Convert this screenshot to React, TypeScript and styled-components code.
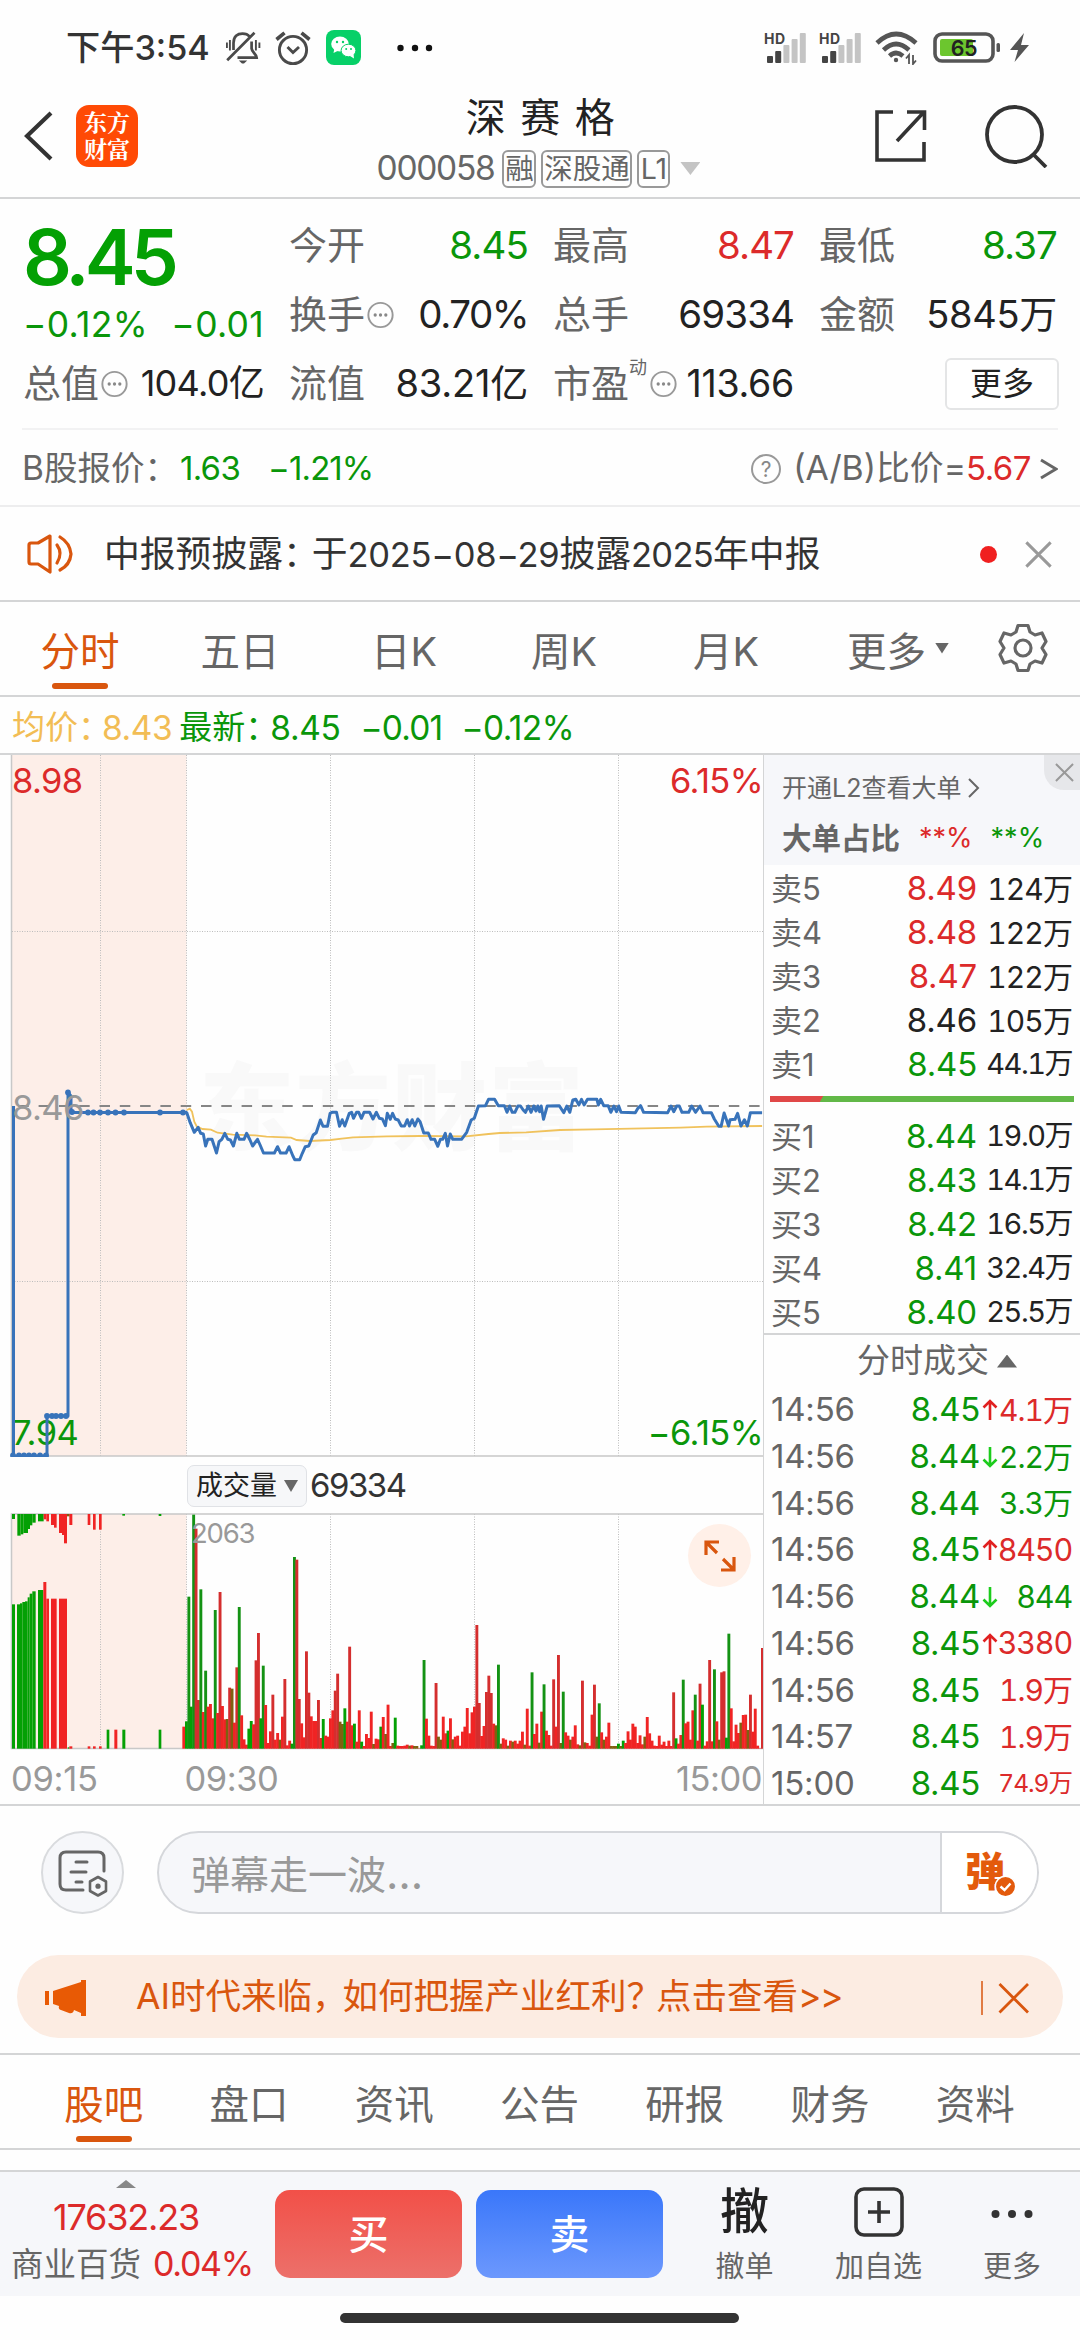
import React from "react";
import styled, { createGlobalStyle } from "styled-components";

const RED = "#dc2a2a";
const GREEN = "#0a960a";
const INK = "#222";
const GRAY = "#666";
const ORANGE = "#d9560e";
const LINE = "#d4d5d6";

const GlobalStyle = createGlobalStyle`
  * { box-sizing: border-box; }
  body {
    margin: 0;
    background: #fefefe;
    font-family: Inter, "Noto Sans CJK SC", sans-serif;
    color: ${INK};
  }
  svg { display: block; flex: none; }
`;

const Page = styled.div`
  width: 1080px;
  height: 2340px;
  overflow: hidden;
  display: flex;
  flex-direction: column;
  background: #fefefe;
`;

const T = styled.span<{ $c?: string; $s?: number; $w?: number; $ls?: number; $tab?: boolean }>`
  color: ${(p) => p.$c ?? INK};
  font-size: ${(p) => p.$s ?? 36}px;
  font-weight: ${(p) => p.$w ?? 400};
  letter-spacing: ${(p) => p.$ls ?? 0}px;
  font-variant-numeric: ${(p) => (p.$tab ? "tabular-nums" : "normal")};
  line-height: 1.2;
  white-space: pre;
`;
/* full-width punctuation and digits set closer than the surrounding characters */
const Tight = styled.span<{ $ls: number; $s?: number }>`
  letter-spacing: ${(p) => p.$ls}px;
  font-size: ${(p) => (p.$s ? `${p.$s}px` : "inherit")};
`;

/* ---------- status bar ---------- */
const StatusBar = styled.div`
  height: 96px;
  flex: none;
  display: flex;
  align-items: center;
  padding: 0 50px 1px 66px;
`;
const StatusLeft = styled.div`
  display: flex;
  align-items: center;
  flex: 1;
`;
const StatusRight = styled.div`
  display: flex;
  align-items: center;
`;
const Gap = styled.div<{ $w: number }>`
  width: ${(p) => p.$w}px;
  flex: none;
`;

const Signal = ({ strong }: { strong: number }) => (
  <svg width="44" height="34" viewBox="0 0 44 34">
    <text x="0" y="12.5" fontSize="14" fontWeight="700" fill="#444" letterSpacing="0.6">HD</text>
    {[0, 1, 2, 3, 4].map((i) => {
      const h = [7, 12, 18, 24, 30][i];
      return <rect key={i} x={3 + i * 8.2} y={32 - h} width="6" height={h} rx="1" fill={i < strong ? "#444" : "#c4c4c4"} />;
    })}
  </svg>
);

/* ---------- header ---------- */
const Header = styled.div`
  height: 103px;
  flex: none;
  display: flex;
  align-items: center;
  padding: 0 31px 0 24px;
  border-bottom: 2px solid ${LINE};
`;
const HeaderSide = styled.div<{ $end?: boolean }>`
  width: 320px;
  display: flex;
  align-items: center;
  padding-bottom: 21px;
  justify-content: ${(p) => (p.$end ? "flex-end" : "flex-start")};
`;
const Logo = styled.div`
  width: 62px;
  height: 62px;
  border-radius: 13px;
  background: #ff4a05;
  color: #fff;
  font: 700 23px/27px "Noto Serif CJK SC", "Noto Sans CJK SC", sans-serif;
  padding: 3px 8px 0;
  word-break: break-all;
`;
const TitleBlock = styled.div`
  flex: 1;
  display: flex;
  flex-direction: column;
  align-items: center;
  padding: 0 0 11px 4px;
`;
const Title = styled.h1`
  margin: 0;
  padding-left: 18px;
  font-size: 40px;
  font-weight: 400;
  letter-spacing: 14.5px;
  line-height: 1.2;
`;
const CodeLine = styled.div`
  display: flex;
  align-items: center;
  height: 40px;
  margin-top: 7px;
`;
const Tag = styled.span<{ $w: number }>`
  width: ${(p) => p.$w}px;
  height: 38px;
  border: 2px solid #999;
  border-radius: 6px;
  color: ${GRAY};
  font-size: 28.5px;
  line-height: 33px;
  display: flex;
  justify-content: center;
  white-space: nowrap;
  margin-right: 5px;
`;
const Tri = styled.i<{ $w: number; $h: number; $c: string; $up?: boolean }>`
  width: ${(p) => p.$w}px;
  height: ${(p) => p.$h}px;
  background: ${(p) => p.$c};
  clip-path: ${(p) => (p.$up ? "polygon(50% 0, 100% 100%, 0 100%)" : "polygon(0 0, 100% 0, 50% 100%)")};
  flex: none;
`;

/* ---------- quote ---------- */
const Quote = styled.div`
  height: 229px;
  flex: none;
  padding: 12px 23px 0 23px;
  display: grid;
  grid-template-columns: 241px 239px 241px 238px;
  column-gap: 25px;
  grid-template-rows: 69px 69px 69px;
  justify-content: space-between;
`;
const LastPrice = styled.div`
  grid-row: 1 / span 2;
  display: flex;
  flex-direction: column;
  padding-top: 2px;
`;
const BigNumber = styled.div`
  font-size: 76.5px;
  font-weight: 600;
  line-height: 88px;
  letter-spacing: -5px;
  color: #04a004;
`;
const Spread = styled.div<{ $h?: number }>`
  display: flex;
  justify-content: space-between;
  align-items: center;
  height: ${(p) => (p.$h ? `${p.$h}px` : "auto")};
`;
const LabelWrap = styled.span`
  display: flex;
  align-items: center;
`;
const Sup = styled.span`
  font-size: 18px;
  line-height: 20px;
  color: ${GRAY};
  align-self: flex-start;
  margin: -3px 1px 0 0;
`;
const MoreButton = styled.button`
  justify-self: end;
  align-self: center;
  width: 114px;
  height: 52px;
  margin-right: -2px;
  border: 2px solid #e4e5e6;
  border-radius: 6px;
  background: #fff;
  color: ${INK};
  font: 400 32px/1 Inter, "Noto Sans CJK SC", sans-serif;
  padding: 0;
`;
const HintIcon = styled.svg`
  margin-left: 2px;
`;
const Hint = () => (
  <HintIcon width="27" height="28" viewBox="0 0 28 28">
    <circle cx="14" cy="14" r="12.6" fill="none" stroke="#999" strokeWidth="2" />
    {[8.5, 14, 19.5].map((x) => <circle key={x} cx={x} cy="14" r="1.7" fill="#888" />)}
  </HintIcon>
);
const CompareRow = styled.div`
  height: 77px;
  flex: none;
  margin: 0 22px;
  padding-top: 2px;
  border-top: 2px solid #f2f2f3;
  display: flex;
  align-items: center;
`;

/* ---------- notice ---------- */
const Notice = styled.div`
  height: 97px;
  flex: none;
  border-top: 2px solid #ededee;
  border-bottom: 2px solid ${LINE};
  display: flex;
  align-items: center;
  padding: 1px 28px 0 26px;
`;
const Dot = styled.i`
  width: 17px;
  height: 17px;
  border-radius: 50%;
  background: #f02020;
`;
const Fill = styled.div`
  flex: 1;
`;

/* ---------- tabs ---------- */
const Tabs = styled.div<{ $h: number }>`
  height: ${(p) => p.$h}px;
  flex: none;
  border-bottom: 2px solid ${LINE};
  display: flex;
  align-items: stretch;
`;
const Tab = styled.div<{ $w: number; $on?: boolean }>`
  width: ${(p) => p.$w}px;
  display: flex;
  align-items: center;
  justify-content: center;
  gap: 9px;
  font-size: 39.5px;
  padding-bottom: 1px;
  color: ${(p) => (p.$on ? ORANGE : GRAY)};
  position: relative;
  &::after {
    content: "";
    display: ${(p) => (p.$on ? "block" : "none")};
    position: absolute;
    left: calc(50% - 28px);
    bottom: 6px;
    width: 56px;
    height: 6px;
    border-radius: 3px;
    background: ${ORANGE};
  }
`;
const AvgLine = styled.div`
  height: 58px;
  flex: none;
  border-bottom: 2px solid ${LINE};
  display: flex;
  align-items: center;
  padding: 6px 0 0 12px;
`;

/* ---------- market area ---------- */
const Market = styled.div`
  height: 1051px;
  flex: none;
  display: flex;
  overflow: hidden;
  border-bottom: 2px solid ${LINE};
`;
const Charts = styled.div`
  width: 763px;
  display: flex;
  flex-direction: column;
`;
const VolumeHead = styled.div`
  height: 56px;
  display: flex;
  align-items: center;
  padding: 2px 0 0 187px;
`;
const VolumePicker = styled.div`
  width: 120px;
  height: 42px;
  border: 1.5px solid #e0e2e6;
  border-radius: 7px;
  background: #f6f7f9;
  display: flex;
  align-items: center;
  justify-content: space-between;
  padding: 0 8px;
  margin-right: 3px;
`;
const VolumeBox = styled.div`
  height: 237px;
  position: relative;
`;
const Expand = styled.div`
  position: absolute;
  left: 688px;
  top: 11px;
  width: 63px;
  height: 63px;
  border-radius: 50%;
  background: #fff0e8;
  display: flex;
  align-items: center;
  justify-content: center;
`;
const TimeAxis = styled.div`
  flex: 1;
  display: flex;
  align-items: center;
  padding: 4px 1px 0 11px;
`;
const Panel = styled.div`
  flex: 1;
  border-left: 1.5px solid ${LINE};
  display: flex;
  flex-direction: column;
`;
const PanelHead = styled.div`
  height: 110px;
  flex: none;
  background: #f6f7fa;
  padding: 8px 0 0 18px;
  position: relative;
`;
const PanelLine = styled.div<{ $h: number }>`
  height: ${(p) => p.$h}px;
  display: flex;
  align-items: center;
`;
const CloseCorner = styled.div`
  position: absolute;
  right: 0;
  top: 0;
  width: 36px;
  height: 35px;
  background: #e6e7ea;
  border-bottom-left-radius: 20px;
  display: flex;
  align-items: center;
  justify-content: center;
  padding-left: 4px;
`;
const BookRow = styled.div`
  height: 44px;
  flex: none;
  display: grid;
  grid-template-columns: 80px 126px 95px;
  padding: 3px 0 0 7px;
  align-items: center;
`;
const Right = styled.div`
  display: flex;
  justify-content: flex-end;
  white-space: nowrap;
`;
const RatioBar = styled.div`
  height: 6px;
  margin: 11px 6px 11px 6px;
  background: linear-gradient(120deg, #e04848 0 17.2%, #62b848 17.4%);
  flex: none;
`;
const TradeHead = styled.div`
  border-top: 2px solid ${LINE};
  height: 53px;
  display: flex;
  align-items: center;
  justify-content: center;
  gap: 8px;
  padding: 1px 0 0 30px;
  flex: none;
`;
const TradeRow = styled.div`
  height: 46.75px;
  flex: none;
  display: grid;
  grid-template-columns: 95px 114px 18px 74px;
  padding: 1px 0 0 7px;
  align-items: center;
`;

/* ---------- comments ---------- */
const CommentRow = styled.div`
  height: 149px;
  flex: none;
  display: flex;
  align-items: flex-start;
  padding: 25px 41px 0;
  gap: 33px;
`;
const RoundButton = styled.div`
  width: 83px;
  height: 83px;
  border: 2px solid #d9dbde;
  border-radius: 50%;
  background: #f6f7fa;
  display: flex;
  align-items: center;
  justify-content: center;
`;
const CommentField = styled.div`
  flex: none;
  width: 882px;
  height: 83px;
  border: 2px solid #d5d7db;
  border-radius: 42px;
  background: #f6f7fa;
  overflow: hidden;
  display: flex;
  align-items: stretch;
`;
const Placeholder = styled.div`
  width: 783px;
  border-right: 2px solid #d5d7db;
  padding-left: 32px;
  font-size: 39px;
  line-height: 80px;
  color: #999;
`;
const DanToggle = styled.div`
  flex: 1;
  background: #fff;
  display: flex;
  align-items: center;
  padding: 0 0 7px 23px;
  font-size: 40px;
  font-weight: 800;
  color: #e35a0c;
  position: relative;
`;
const Badge = styled.div`
  position: absolute;
  left: 52px;
  top: 42px;
`;
const Banner = styled.div`
  height: 83px;
  flex: none;
  margin: 0 17px 15px;
  border-radius: 42px;
  background: #fcece2;
  display: flex;
  align-items: center;
  padding: 2px 34px 0 27px;
`;
const BottomTabs = styled(Tabs)`
  border-top: 2px solid ${LINE};
  padding: 0 32px 0 31px;
`;

/* ---------- footer ---------- */
const Footer = styled.div`
  height: 126px;
  flex: none;
  margin-top: 20px;
  border-top: 2px solid ${LINE};
  background: #f6f7fa;
  display: flex;
`;
const IndexCell = styled.div`
  width: 275px;
  display: flex;
  flex-direction: column;
  padding: 8px 0 0 11px;
`;
const IndexArrow = styled(Tri)`
  margin-left: 105px;
`;
const Trade = styled.button<{ $sell?: boolean }>`
  width: 187px;
  height: 88px;
  margin: 18px 14px 0 0;
  border: 0;
  padding: 0 0 4px;
  border-radius: 15px;
  color: #fff;
  font: 500 40px/1 "Noto Sans CJK SC", sans-serif;
  background: ${(p) => (p.$sell ? "linear-gradient(#3a77fa, #6c98fd)" : "linear-gradient(#f25048, #ec706a)")};
`;
const Action = styled.div<{ $w: number }>`
  width: ${(p) => p.$w}px;
  display: flex;
  flex-direction: column;
  align-items: center;
  padding-top: 14px;
`;
const ActionIcon = styled.div`
  height: 52px;
  display: flex;
  align-items: center;
  justify-content: center;
  font-size: 49px;
  line-height: 54px;
  font-weight: 500;
  margin-bottom: 12px;
`;
const HomeBar = styled.div`
  width: 399px;
  height: 10px;
  flex: none;
  border-radius: 5px;
  background: #333;
  margin: 17px auto 0 340px;
`;

/* ---------- data ---------- */
const price: [number, number][] = [
  [10,188],[18,188],[27,218],[38,247],[48,232],[55,250],[62,252],[68,288],[74,268],[85,268],[97,309],[104,275],[111,268],[119,250],[127,268],[134,270],[142,288],[151,250],[158,268],[170,268],[177,250],[186,270],[193,288],[206,268],[213,285],[222,309],[251,309],[259,290],[267,309],[282,309],[290,290],[300,318],[305,329],[318,329],[325,310],[333,290],[342,288],[354,255],[362,248],[373,210],[380,229],[392,229],[399,190],[404,187],[416,187],[424,229],[431,209],[438,228],[450,190],[456,187],[461,205],[469,187],[475,187],[482,205],[489,187],[504,187],[513,207],[522,187],[530,205],[538,207],[546,227],[551,190],[559,208],[565,190],[572,207],[580,210],[588,228],[597,228],[604,209],[610,228],[617,209],[624,228],[632,207],[638,215],[648,249],[660,249],[667,268],[677,268],[685,289],[692,268],[698,268],[705,250],[711,288],[718,252],[725,268],[748,268],[762,247],[774,210],[782,205],[793,168],[812,167],[820,148],[836,148],[846,167],[862,167],[869,187],[876,168],[883,187],[890,187],[898,168],[905,168],[912,180],[918,187],[926,168],[933,187],[940,168],[946,183],[951,168],[956,185],[960,168],[966,208],[976,168],[1008,167],[1020,188],[1028,168],[1036,187],[1044,150],[1052,148],[1060,165],[1067,148],[1074,165],[1083,148],[1108,148],[1112,165],[1118,148],[1126,167],[1138,167],[1145,187],[1153,168],[1160,185],[1166,168],[1172,187],[1210,188],[1217,175],[1224,167],[1232,187],[1296,188],[1305,168],[1312,185],[1320,168],[1327,168],[1334,187],[1352,187],[1360,168],[1370,187],[1382,168],[1390,188],[1412,188],[1420,207],[1432,229],[1438,229],[1446,189],[1458,228],[1462,209],[1475,208],[1482,190],[1491,228],[1500,209],[1508,228],[1516,188],[1547,188],
];
const average: [number, number][] = [
  [18,180],[26,176],[32,185],[38,215],[45,230],[60,237],[82,239],[100,248],[140,254],[200,256],[230,260],[295,263],[310,270],[345,273],[400,270],[430,266],[460,262],[550,259],[640,258],[760,259],[820,252],[850,249],[920,247],[1010,240],[1100,238],[1200,236],[1330,233],[1400,230],[1547,228],
];
const toPoints = (list: [number, number][]) =>
  list.map(([x, y]) => `${(180 + x / 2.6576).toFixed(1)},${(295 + y / 3).toFixed(1)}`).join(" ");

/* one entry per minute: bar top (thirds of a pixel), g = falling, b = mixed, otherwise rising */
const volume =
  "812g 438g 768g 192g 234 748 416g 784 660g 768 760 803 478g 787 424 766 806 805b 711 714b 816 650 469g 794 866 882 834g 811g 821 629 547 803g 645g 763 877 842 732 867 847 867b 798 685 884 870 879g 319g 327 745 818 860 602 726 797 811 811 748 862 805g 855 858 803 779 720 669 813b 820b 773g 813 588 824 819g 873 779 873g 886 850 862 783 880b 864 866 828g 799 850b 762 886 877b 801g 885 886 886 885 882 885b 884 886b 886b 893 884g 628g 804 855 885 886 697 858b 867b 798 848 840g 803 866b 858 855 885 843 828 772 848 785 768 523 757 856 826 724 675 727 819 824b 642g 879b 863 867 885b 870 873b 870 879 870 843 882b 774 885 665g 850 819 876b 783 701g 840 853 885 686 828 613 877b 723g 845 855 867b 858 824 881 884b 690 875b 877 885 792 702 858b 758g 845 867b 858 816 886b 886b 886b 879g 886b 870g 877 842 867 819 828 877 854 881 858b 799 848 870 885 886 855 882 873 886 870 886 725 863g 879 853 687g 818 813 867 779 732g 870 699 762g 885 872 628 872 656g 812 867b 665 662 861g 549g 773 872 822 847 816b 793 792 838b 732 843 774 885 893 592".split(" ");

/* call-auction bars: x, width, top, bottom, colour */
const auction: [number, number, number, number, string][] = [
  [36,9,461,894,"g"],[51,9,461,894,"g"],[60,7,458,894,"g"],[67,8,454,894,"g"],[75,8,452,894,"g"],[83,6,440,894,"g"],[89,8,429,894,"g"],[97,10,422,894,"g"],
  [114,16,418,894,"g"],[130,9,394,894,"r"],[139,8,444,894,"r"],[153,17,444,894,"r"],[177,24,444,894,"r"],[203,5,890,894,"g"],[208,9,887,894,"r"],
  [263,8,887,894,"r"],[279,8,887,894,"r"],[297,8,887,894,"r"],[320,8,837,894,"g"],[343,9,837,894,"r"],[367,9,837,894,"g"],[476,8,837,894,"g"],[547,8,828,894,"r"],
  [36,9,190,205,"g"],[52,10,190,255,"g"],[62,8,190,251,"g"],[70,14,190,247,"g"],[84,6,190,235,"g"],[90,7,190,224,"g"],[97,10,190,216,"g"],[114,17,190,212,"g"],
  [131,8,190,206,"r"],[139,8,190,212,"r"],[153,9,190,223,"r"],[162,8,190,231,"r"],[177,9,190,247,"r"],[186,6,190,253,"r"],[192,9,190,278,"r"],[201,8,190,197,"b"],[208,9,190,223,"r"],
  [263,8,190,223,"r"],[279,8,190,237,"r"],[297,8,190,237,"r"],[367,8,190,195,"g"],[476,8,190,196,"g"],
];
const barColor: Record<string, string> = { g: "#04a004", r: "#f02424", b: "#806010" };
const verticals = [100.5, 186.5, 330.5, 474.5, 618.5];

const PriceChart = () => (
  <svg width="763" height="702" viewBox="0 0 763 702" fontFamily="Inter, sans-serif" fontSize="34.5" letterSpacing="-0.6">
    <rect x="12" y="0" width="174.5" height="701" fill="#fdeee8" />
    <text x="199" y="388" fontFamily="Noto Sans CJK SC" fontWeight="900" fontSize="95" letterSpacing="1.5" fill="#f9f9f9">东方财富</text>
    <g stroke="#bcbcbc" strokeWidth="1" strokeDasharray="1 1.500">
      {verticals.map((x) => <path key={x} d={`M${x} 0V701`} />)}
      <path d="M12 176.5H763M12 526.5H763" />
    </g>
    <path d="M11.5 0V701H763" fill="none" stroke="#c8c8c8" strokeWidth="1.5" />
    <path d="M12 351H763" stroke="#868686" strokeWidth="2" strokeDasharray="10.5 9.8" strokeDashoffset="14" />
    <text x="12" y="38" fill={RED}>8.98</text>
    <text x="763" y="38" fill={RED} textAnchor="end">6.15%</text>
    <text x="12" y="690" fill={GREEN}>7.94</text>
    <text x="763" y="690" fill={GREEN} textAnchor="end">−6.15%</text>
    <polyline points={toPoints(average)} fill="none" stroke="#f0c25c" strokeWidth="1.8" />
    <path d="M13.5 351V701H47V661H68V337.5L71 341V357.5H187" fill="none" stroke="#3873ba" strokeWidth="3" strokeLinejoin="round" />
    <g fill="#3873ba">
      {[88, 93.5, 100, 108, 115.5, 124, 160, 183].map((x) => <circle key={x} cx={x} cy="357.5" r="2.9" />)}
      {[13, 19, 24, 29, 34, 40, 46].map((x) => <circle key={x} cx={x} cy="700.5" r="2.9" />)}
      {[47, 52, 56, 61, 66].map((x) => <circle key={x} cx={x} cy="661" r="2.9" />)}
      <circle cx="68" cy="337.5" r="2.9" />
      <circle cx="72" cy="357" r="2.9" />
    </g>
    <polyline points={toPoints(price)} fill="none" stroke="#3873ba" strokeWidth="3" strokeLinejoin="round" />
    <text x="12" y="364.5" fill="#999">8.46</text>
  </svg>
);

const VolumeChart = () => (
  <svg width="763" height="237" viewBox="0 0 763 237">
    <rect x="12" y="1" width="174.5" height="234" fill="#fdeee8" />
    <g stroke="#bcbcbc" strokeWidth="1" strokeDasharray="1 1.500">
      {verticals.map((x) => <path key={x} d={`M${x} 1V235`} />)}
    </g>
    <path d="M763 1H11.5V235.5H763" fill="none" stroke="#c8c8c8" strokeWidth="1.5" />
    {auction.map(([x, w, a, b, c], i) => (
      <rect key={i} x={x / 3} width={w / 3} y={(a - 187) / 3} height={(b - a) / 3} fill={barColor[c]} />
    ))}
    {volume.map((v, i) => {
      const top = parseInt(v, 10);
      const kind = /[gb]$/.test(v) ? v.slice(-1) : "r";
      return <rect key={i} x={185 + i * 2.4} width="2.9" y={(top - 187) / 3} height={(894 - top) / 3} fill={kind === "r" && top < 760 ? "#d42e2e" : kind === "g" && top < 760 ? "#149214" : barColor[kind]} />;
    })}
    <text x="191" y="30" fontSize="27.5" fill="#999" letterSpacing="-1.2">2063</text>
  </svg>
);

const asks = [["卖5", "8.49", "124万", RED], ["卖4", "8.48", "122万", RED], ["卖3", "8.47", "122万", RED], ["卖2", "8.46", "105万", INK], ["卖1", "8.45", "44.1万", GREEN]];
const bids = [["买1", "8.44", "19.0万"], ["买2", "8.43", "14.1万"], ["买3", "8.42", "16.5万"], ["买4", "8.41", "32.4万"], ["买5", "8.40", "25.5万"]];
const trades: [string, string, string, string, string][] = [
  ["14:56", "8.45", "up", "4.1万", RED], ["14:56", "8.44", "down", "2.2万", GREEN], ["14:56", "8.44", "", "3.3万", GREEN],
  ["14:56", "8.45", "up", "8450", RED], ["14:56", "8.44", "down", "844", GREEN], ["14:56", "8.45", "up", "3380", RED],
  ["14:56", "8.45", "", "1.9万", RED], ["14:57", "8.45", "", "1.9万", RED], ["15:00", "8.45", "", "74.9万", RED],
];

const Book = ({ row }: { row: string[] }) => (
  <BookRow>
    <T $c={GRAY} $s={31}>{row[0]}</T>
    <Right><T $c={row[3] ?? GREEN} $s={33} $ls={-0.2}>{row[1]}</T></Right>
    <Right><T $tab $s={row[2].length > 4 ? 29 : 30} $ls={row[2].length > 4 ? -1.5 : -0.9}>{row[2]}</T></Right>
  </BookRow>
);

const Cross = ({ size, color, w = 2.5 }: { size: number; color: string; w?: number }) => (
  <svg width={size} height={size} viewBox="0 0 20 20">
    <path d="M1 1L19 19M19 1L1 19" stroke={color} strokeWidth={(w * 20) / size} fill="none" />
  </svg>
);

const Item = ({ label, value, color, hint, sup, s = 38.5, ls = -0.9 }: { label: string; value: string; color?: string; hint?: boolean; sup?: string; s?: number; ls?: number }) => (
  <Spread>
    <LabelWrap>
      <T $c={GRAY} $s={38}>{label}</T>
      {sup && <Sup>{sup}</Sup>}
      {hint && <Hint />}
    </LabelWrap>
    <T $c={color} $s={s} $ls={ls}>{value}</T>
  </Spread>
);

export default function App() {
  return (
    <>
      <GlobalStyle />
      <Page>
        <StatusBar>
          <StatusLeft>
            <T $s={34.2} $w={500} $c="#333">下午3:54</T>
            <Gap $w={16} />
            <svg width="36" height="36" viewBox="0 0 36 36" fill="none" stroke="#4a4a4a" strokeWidth="2.700">
              <path d="M7.500 20V13C7.500 6 11.500 3.600 16.500 3.600C19.500 3.600 22 4.600 23.500 6.500M25.600 11.500V18.500C26 22.500 30.500 24 30.700 27.700H11.500M28.500 2.700L1.200 30.300" />
              <path d="M12.800 30.500H21.200L18 33.500H16Z" fill="#4a4a4a" stroke="none" />
              <path d="M3.900 10V20.500M0.900 12.500V18M29.900 10V20.500M33.400 12.500V18" strokeWidth="1.900" />
            </svg>
            <Gap $w={13} />
            <svg width="36" height="36" viewBox="0 0 36 36" fill="none" stroke="#4a4a4a" strokeWidth="2.900">
              <circle cx="18" cy="20" r="13.600" />
              <path d="M1.500 9.500L9.500 2.800M34.500 9.500L26.500 2.800" strokeWidth="3.600" />
              <path d="M12.500 17L18 22.500L24 17" />
            </svg>
            <Gap $w={15} />
            <svg width="35" height="35" viewBox="0 0 35 35">
              <rect width="35" height="35" rx="8" fill="#07d068" />
              <ellipse cx="14" cy="14" rx="8.800" ry="7.400" fill="#fff" />
              <path d="M8.500 18L7.500 23L12.500 20.500Z" fill="#fff" />
              <ellipse cx="22.500" cy="20.500" rx="7.400" ry="6.300" fill="#fff" stroke="#07d068" strokeWidth="1" />
              <path d="M24 26L28 28.500L27.500 24Z" fill="#fff" />
              <circle cx="11" cy="12" r="1.200" fill="#07d068" /><circle cx="17" cy="12" r="1.200" fill="#07d068" />
              <circle cx="20.200" cy="19" r="1" fill="#07d068" /><circle cx="25" cy="19" r="1" fill="#07d068" />
            </svg>
            <Gap $w={36} />
            <svg width="36" height="8" viewBox="0 0 36 8" fill="#111"><circle cx="3.500" cy="4" r="3.200" /><circle cx="18" cy="4" r="3.200" /><circle cx="32" cy="4" r="3.200" /></svg>
          </StatusLeft>
          <StatusRight>
            <Signal strong={2} />
            <Gap $w={11} />
            <Signal strong={2} />
            <Gap $w={12} />
            <svg width="44" height="34" viewBox="0 0 44 34" fill="none" stroke="#555" strokeWidth="4.600">
              <path d="M2 12Q21 -6 41 12M8.500 19Q21 7 34 19M14.500 25Q21 19 28 25" />
              <circle cx="21" cy="29" r="2.200" fill="#555" stroke="none" />
              <path d="M34 33V24L31 27.500M38 24V33L41 29.500" strokeWidth="1.800" />
            </svg>
            <Gap $w={14} />
            <svg width="68" height="32" viewBox="0 0 68 32">
              <rect x="2" y="2" width="58" height="27" rx="7" fill="none" stroke="#555" strokeWidth="3.600" />
              <rect x="7" y="7" width="33" height="17" rx="2" fill="#6cc62e" />
              <rect x="63.500" y="11" width="3.500" height="9" rx="1.500" fill="#555" />
              <text x="31" y="23.500" textAnchor="middle" fontSize="21.500" fontWeight="600" fill="#222" letterSpacing="-0.500">65</text>
            </svg>
            <Gap $w={8} />
            <svg width="21" height="30" viewBox="0 0 21 30" fill="#555"><path d="M15 0L1 17H9L5.500 29L20 12H12Z" /></svg>
          </StatusRight>
        </StatusBar>

        <Header>
          <HeaderSide>
            <svg width="30" height="52" viewBox="0 0 30 52" fill="none" stroke="#333" strokeWidth="4.200"><path d="M27 3L3 26L27 49" /></svg>
            <Gap $w={22} />
            <Logo>东方财富</Logo>
          </HeaderSide>
          <TitleBlock>
            <Title>深赛格</Title>
            <CodeLine>
              <T $c={GRAY} $s={33.5} $ls={-1.3}>000058</T>
              <Gap $w={8} />
              <Tag $w={34}>融</Tag>
              <Tag $w={91}>深股通</Tag>
              <Tag $w={33}>L1</Tag>
              <Gap $w={5} />
              <Tri $w={20} $h={13} $c="#c4c4c4" />
            </CodeLine>
          </TitleBlock>
          <HeaderSide $end>
            <svg width="54" height="54" viewBox="0 0 54 54" fill="none" stroke="#333" strokeWidth="3.600">
              <path d="M19 3H3V51H50V33M33 3H50.500V21M50 3L23 32" />
            </svg>
            <Gap $w={57} />
            <svg width="64" height="64" viewBox="0 0 64 64" fill="none" stroke="#333" strokeWidth="3.800">
              <circle cx="29.500" cy="30.500" r="27.500" /><path d="M48 50L61 63" />
            </svg>
          </HeaderSide>
        </Header>

        <Quote>
          <LastPrice>
            <BigNumber>8.45</BigNumber>
            <Spread $h={57}>
              <T $c={GREEN} $s={35.5} $ls={0.3}>−0.12%</T>
              <T $c={GREEN} $s={35.5} $ls={0.3}>−0.01</T>
            </Spread>
          </LastPrice>
          <Item label="今开" value="8.45" color={GREEN} />
          <Item label="最高" value="8.47" color={RED} />
          <Item label="最低" value="8.37" color={GREEN} />
          <Item label="换手" value="0.70%" hint ls={-1.5} />
          <Item label="总手" value="69334" />
          <Item label="金额" value="5845万" s={38} ls={-0.3} />
          <Item label="总值" value="104.0亿" hint s={36} ls={-0.7} />
          <Item label="流值" value="83.21亿" s={38} ls={-0.2} />
          <Item label="市盈" value="113.66" hint sup="动" s={37.5} ls={-0.3} />
          <MoreButton>更多</MoreButton>
        </Quote>

        <CompareRow>
          <T $c={GRAY} $s={33.5}>B股报价<Tight $ls={-6}>：</Tight></T>
          <Gap $w={8} />
          <T $c={GREEN} $s={33} $ls={-0.7}>1.63</T>
          <Gap $w={28} />
          <T $c={GREEN} $s={33} $ls={-0.9}>−1.21%</T>
          <Fill />
          <svg width="32" height="32" viewBox="0 0 32 32">
            <circle cx="16" cy="16" r="14" fill="none" stroke="#999" strokeWidth="2" />
            <text x="16" y="23.500" textAnchor="middle" fontSize="21" fill="#888">?</text>
          </svg>
          <Gap $w={11} />
          <T $c={GRAY} $s={33.8}>(A/B)比价=</T>
          <T $c={RED} $s={33} $ls={-0.5}>5.67</T>
          <Gap $w={9} />
          <svg width="18" height="22" viewBox="0 0 18 22" fill="none" stroke="#666" strokeWidth="3"><path d="M1 2L16 11L1 20" /></svg>
        </CompareRow>

        <Notice>
          <svg width="48" height="42" viewBox="0 0 48 42" fill="none" stroke={ORANGE} strokeWidth="3.200" strokeLinejoin="round" strokeLinecap="round">
            <path d="M24 3L12 10H5Q3 10 3 12V29Q3 31 5 31H12L24 39Z" />
            <path d="M31 12Q37 20 31 30M34 4Q44 10 45 21Q44 32 34 37" />
          </svg>
          <Gap $w={30} />
          <T $c="#333" $s={35.8}>
            中报预披露<Tight $ls={-7}>：</Tight>于<Tight $ls={-0.3} $s={34.5}>2025−08−29</Tight>披露<Tight $ls={-0.7} $s={34.5}>2025</Tight>年中报
          </T>
          <Fill />
          <Dot />
          <Gap $w={28} />
          <Cross size={27} color="#999" w={3} />
        </Notice>

        <Tabs $h={95}>
          <Tab $w={160} $on>分时</Tab>
          <Tab $w={160}>五日</Tab>
          <Tab $w={168}>日K</Tab>
          <Tab $w={152}>周K</Tab>
          <Tab $w={172}>月K</Tab>
          <Tab $w={172}>更多<Tri $w={14} $h={11} $c={GRAY} /></Tab>
          <Gap $w={14} />
          <Tab $w={50}>
            <svg width="50" height="50" viewBox="0 0 50 50" fill="none" stroke={GRAY} strokeWidth="3.200" strokeLinejoin="round">
              <path d="M20 2.500H30L32 9L37 12L44 10L48 18.500L44 25L48 31.500L44 40L37 38L32 41L30 47.500H20L18 41L13 38L6 40L2 31.500L6 25L2 18.500L6 10L13 12L18 9Z" />
              <circle cx="25" cy="25" r="8" />
            </svg>
          </Tab>
        </Tabs>

        <AvgLine>
          <T $c="#f2bd55" $s={33}>均价<Tight $ls={-9}>：</Tight></T>
          <T $c="#f2bd55" $s={33.5} $ls={-0.4}>8.43</T>
          <Gap $w={7} />
          <T $c={GREEN} $s={33}>最新<Tight $ls={-8}>：</Tight></T>
          <T $c={GREEN} $s={33.5} $ls={-0.4}>8.45</T>
          <Gap $w={20} />
          <T $c={GREEN} $s={33.5} $ls={-0.8}>−0.01</T>
          <Gap $w={19} />
          <T $c={GREEN} $s={33.5} $ls={-0.6}>−0.12%</T>
        </AvgLine>

        <Market>
          <Charts>
            <PriceChart />
            <VolumeHead>
              <VolumePicker>
                <T $s={27}>成交量</T>
                <Tri $w={14} $h={12} $c={GRAY} />
              </VolumePicker>
              <T $c="#333" $s={33} $ls={-1.5}>69334</T>
            </VolumeHead>
            <VolumeBox>
              <VolumeChart />
              <Expand>
                <svg width="32" height="32" viewBox="0 0 32 32" fill="none" stroke={ORANGE} strokeWidth="3.200">
                  <path d="M15 2H2V15M2 2L13 13M17 30H30V17M30 30L19 19" />
                </svg>
              </Expand>
            </VolumeBox>
            <TimeAxis>
              <T $c="#999" $s={34.5} $ls={-0.3}>09:15</T>
              <Gap $w={87} />
              <T $c="#999" $s={34.5} $ls={-0.5}>09:30</T>
              <Fill />
              <T $c="#999" $s={34.5} $ls={-0.5}>15:00</T>
            </TimeAxis>
          </Charts>

          <Panel>
            <PanelHead>
              <PanelLine $h={49}>
                <T $c={GRAY} $s={25}>开通L2查看大单</T>
                <Gap $w={7} />
                <svg width="12" height="20" viewBox="0 0 12 20" fill="none" stroke={GRAY} strokeWidth="2"><path d="M1 1L10 10L1 19" /></svg>
              </PanelLine>
              <PanelLine $h={53}>
                <T $c={GRAY} $s={29.5} $w={700}>大单占比</T>
                <Gap $w={19} />
                <T $c={RED} $s={27}>**%</T>
                <Gap $w={18} />
                <T $c={GREEN} $s={27}>**%</T>
              </PanelLine>
              <CloseCorner><Cross size={19} color="#999" w={2} /></CloseCorner>
            </PanelHead>
            {asks.map((r) => <Book key={r[0]} row={r} />)}
            <RatioBar />
            {bids.map((r) => <Book key={r[0]} row={r} />)}
            <TradeHead>
              <T $c={GRAY} $s={33}>分时成交</T>
              <Tri $w={20} $h={13} $c={GRAY} $up />
            </TradeHead>
            {trades.map((t, i) => (
              <TradeRow key={i}>
                <T $c={GRAY} $s={33} $ls={-0.2}>{t[0]}</T>
                <Right><T $c={GREEN} $s={33} $ls={-0.3}>{t[1]}</T></Right>
                {t[2] ? (
                  <svg width="18" height="22" viewBox="0 0 18 22" fill="none" strokeWidth="2.600" stroke={t[2] === "up" ? "#e02020" : "#1ccc1c"}>
                    <path d={t[2] === "up" ? "M10 21V3M3.500 8.500L10 2L16.500 8.500" : "M10 1V19M3.500 13.500L10 20L16.500 13.500"} />
                  </svg>
                ) : <span />}
                <Right><T $tab $c={t[4]} $s={i === 8 ? 24.5 : t[3].endsWith("万") ? 30 : 30.5} $ls={t[3].endsWith("万") ? -1 : -1.2}>{t[3]}</T></Right>
              </TradeRow>
            ))}
          </Panel>
        </Market>

        <CommentRow>
          <RoundButton>
            <svg width="52" height="50" viewBox="0 0 52 50" fill="none" stroke="#666" strokeWidth="3" strokeLinecap="round">
              <path d="M26 42H9Q3 42 3 36V10Q3 4 9 4H41Q47 4 47 10V23M19 14H30M14 24H29M19 34H25" />
              <path d="M41 29L49 33.500V43L41 47.500L33 43V33.500Z" strokeLinejoin="round" strokeWidth="2.600" />
              <circle cx="41" cy="38.200" r="2.600" fill="#666" stroke="none" />
            </svg>
          </RoundButton>
          <CommentField>
            <Placeholder>弹幕走一波<Tight $ls={0} $s={43}>…</Tight></Placeholder>
            <DanToggle>
              弹
              <Badge>
                <svg width="23" height="23" viewBox="0 0 23 23" fill="none">
                  <circle cx="11.500" cy="11.500" r="10.200" fill="#e35a0c" stroke="#fff" strokeWidth="1.500" />
                  <path d="M6.500 11.500L10.500 15L16.500 8.500" stroke="#fff" strokeWidth="2.400" />
                </svg>
              </Badge>
            </DanToggle>
          </CommentField>
        </CommentRow>

        <Banner>
          <svg width="44" height="38" viewBox="0 0 44 38" fill="#e85a05">
            <path d="M1 12H5V26H1ZM9 12L37 3V1H42V37H37V34L30 31Q29 35 25 34L17 31Q14 30 15 27L9 25Z" />
          </svg>
          <Gap $w={48} />
          <T $c={ORANGE} $s={35.5}>
            AI时代来临<Tight $ls={-5}>，</Tight>如何把握产业红利<Tight $ls={-6}>？</Tight>点击查看<Tight $ls={-1.5}>&gt;&gt;</Tight>
          </T>
          <Fill />
          <svg width="48" height="34" viewBox="0 0 48 34" fill="none" stroke={ORANGE}>
            <path d="M1 0V34" strokeWidth="1.500" /><path d="M18.500 3L47 31.500M47 3L18.500 31.500" strokeWidth="2.800" />
          </svg>
        </Banner>

        <BottomTabs $h={97}>
          {["股吧", "盘口", "资讯", "公告", "研报", "财务", "资料"].map((n, i) => (
            <Tab key={n} $w={145.3} $on={i === 0}>{n}</Tab>
          ))}
        </BottomTabs>

        <Footer>
          <IndexCell>
            <IndexArrow $w={20} $h={8} $c="#888" $up />
            <PanelLine $h={60}>
              <Gap $w={42} />
              <T $c={RED} $s={36} $ls={-1.2}>17632.23</T>
            </PanelLine>
            <PanelLine $h={32}>
              <T $c={GRAY} $s={32.5}>商业百货</T>
              <Gap $w={12} />
              <T $c={RED} $s={34} $ls={-1.3}>0.04%</T>
            </PanelLine>
          </IndexCell>
          <Trade>买</Trade>
          <Trade $sell>卖</Trade>
          <Action $w={135}>
            <ActionIcon>撤</ActionIcon>
            <T $c={GRAY} $s={29}>撤单</T>
          </Action>
          <Action $w={133}>
            <ActionIcon>
              <svg width="50" height="50" viewBox="0 0 50 50" fill="none" stroke="#333" strokeWidth="3.600"><rect x="2" y="2" width="46" height="46" rx="8" /><path d="M25 14V36M14 25H36" /></svg>
            </ActionIcon>
            <T $c={GRAY} $s={29}>加自选</T>
          </Action>
          <Action $w={134}>
            <ActionIcon>
              <svg width="42" height="12" viewBox="0 0 42 12" fill="#333"><circle cx="4.500" cy="8" r="4" /><circle cx="21" cy="8" r="4" /><circle cx="37.500" cy="8" r="4" /></svg>
            </ActionIcon>
            <T $c={GRAY} $s={29}>更多</T>
          </Action>
        </Footer>
        <HomeBar />
      </Page>
    </>
  );
}
